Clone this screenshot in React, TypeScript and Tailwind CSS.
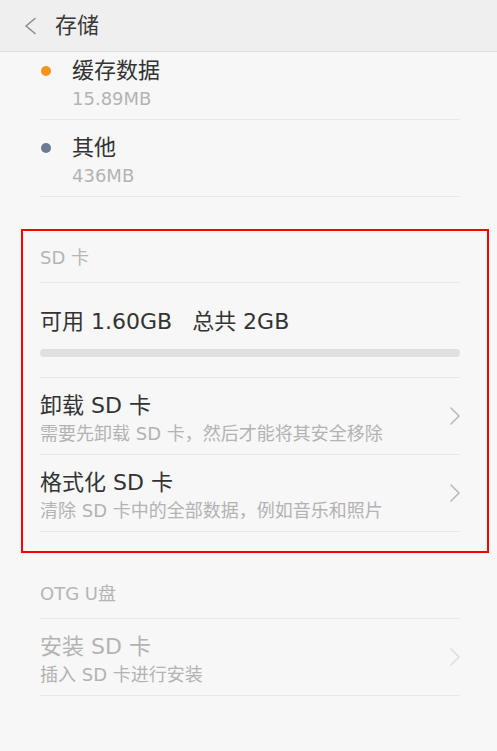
import React from "react";

function Chevron({ light }: { light?: boolean }) {
  return (
    <svg width="10" height="18" viewBox="0 0 10 18" fill="none">
      <polyline
        points="1,1 9,9 1,17"
        stroke={light ? "#dedede" : "#b9b9b9"}
        strokeWidth="1.6"
        strokeLinecap="round"
        strokeLinejoin="round"
      />
    </svg>
  );
}

function DotRow({ color, title, sub }: { color: string; title: string; sub: string }) {
  return (
    <div className="border-b border-[#e8e8e8] pt-[14px] pb-[7px]">
      <div className="flex h-[28px] items-center">
        <span className="ml-[1px] h-[10px] w-[10px] rounded-full" style={{ backgroundColor: color }} />
        <span className="ml-[21px] text-[22px] leading-[28px] text-[#333333]">{title}</span>
      </div>
      <div className="h-[27px] pl-[32px] text-[18px] leading-[27px] text-[#b3b3b3]">{sub}</div>
    </div>
  );
}

function ActionRow({ title, sub, disabled }: { title: string; sub: string; disabled?: boolean }) {
  return (
    <div className="flex border-b border-[#e8e8e8]">
      <div className="flex-1 pt-[14px] pb-[7px]">
        <div className={`h-[28px] text-[22px] leading-[28px] ${disabled ? "text-[#b3b3b3]" : "text-[#333333]"}`}>
          {title}
        </div>
        <div className="h-[27px] text-[18px] leading-[27px] text-[#b3b3b3]">{sub}</div>
      </div>
      <div className="flex items-center">
        <Chevron light={disabled} />
      </div>
    </div>
  );
}

function SectionHeader({ label }: { label: string }) {
  return (
    <div className="border-b border-[#e8e8e8] pt-[15px] pb-[12px] text-[18px] leading-[24px] text-[#b5b5b5]">
      {label}
    </div>
  );
}

export default function App() {
  return (
    <div className="flex h-[751px] w-full flex-col overflow-hidden bg-[#f7f7f7] font-['DejaVu_Sans','Noto_Sans_CJK_SC',sans-serif]">
      <div className="flex h-[52px] shrink-0 items-center border-b border-[#dedede] bg-[#efefef]">
        <svg className="ml-[24px]" width="12" height="18" viewBox="0 0 12 18" fill="none">
          <polyline
            points="11,1.5 2,9 11,16.5"
            stroke="#8c8c8c"
            strokeWidth="1.6"
            strokeLinecap="round"
            strokeLinejoin="round"
          />
        </svg>
        <span className="ml-[19px] text-[22px] leading-[28px] text-[#383838]">存储</span>
      </div>

      <div className="flex-1 overflow-hidden">
        <div className="mt-[-9px] pl-[40px] pr-[37px]">
          <DotRow color="#f7921e" title="缓存数据" sub="15.89MB" />
          <DotRow color="#6c7b92" title="其他" sub="436MB" />
        </div>

        <div className="mt-[32px] ml-[21px] w-[468px] border-2 border-[#ff0000] pl-[17px] pr-[27px] pb-[19px]">
          <SectionHeader label="SD 卡" />
          <div className="border-b border-[#e8e8e8] pt-[25px] pb-[20px]">
            <div className="h-[28px] text-[22px] leading-[28px] text-[#333333]">
              可用 1.60GB<span className="ml-[20px]">总共 2GB</span>
            </div>
            <div className="mt-[13px] h-[8px] rounded-full bg-[#e0e0e0]" />
          </div>
          <ActionRow title="卸载 SD 卡" sub="需要先卸载 SD 卡，然后才能将其安全移除" />
          <ActionRow title="格式化 SD 卡" sub="清除 SD 卡中的全部数据，例如音乐和照片" />
        </div>

        <div className="mt-[14px] pl-[40px] pr-[37px]">
          <SectionHeader label="OTG U盘" />
          <ActionRow title="安装 SD 卡" sub="插入 SD 卡进行安装" disabled />
        </div>
      </div>
    </div>
  );
}
